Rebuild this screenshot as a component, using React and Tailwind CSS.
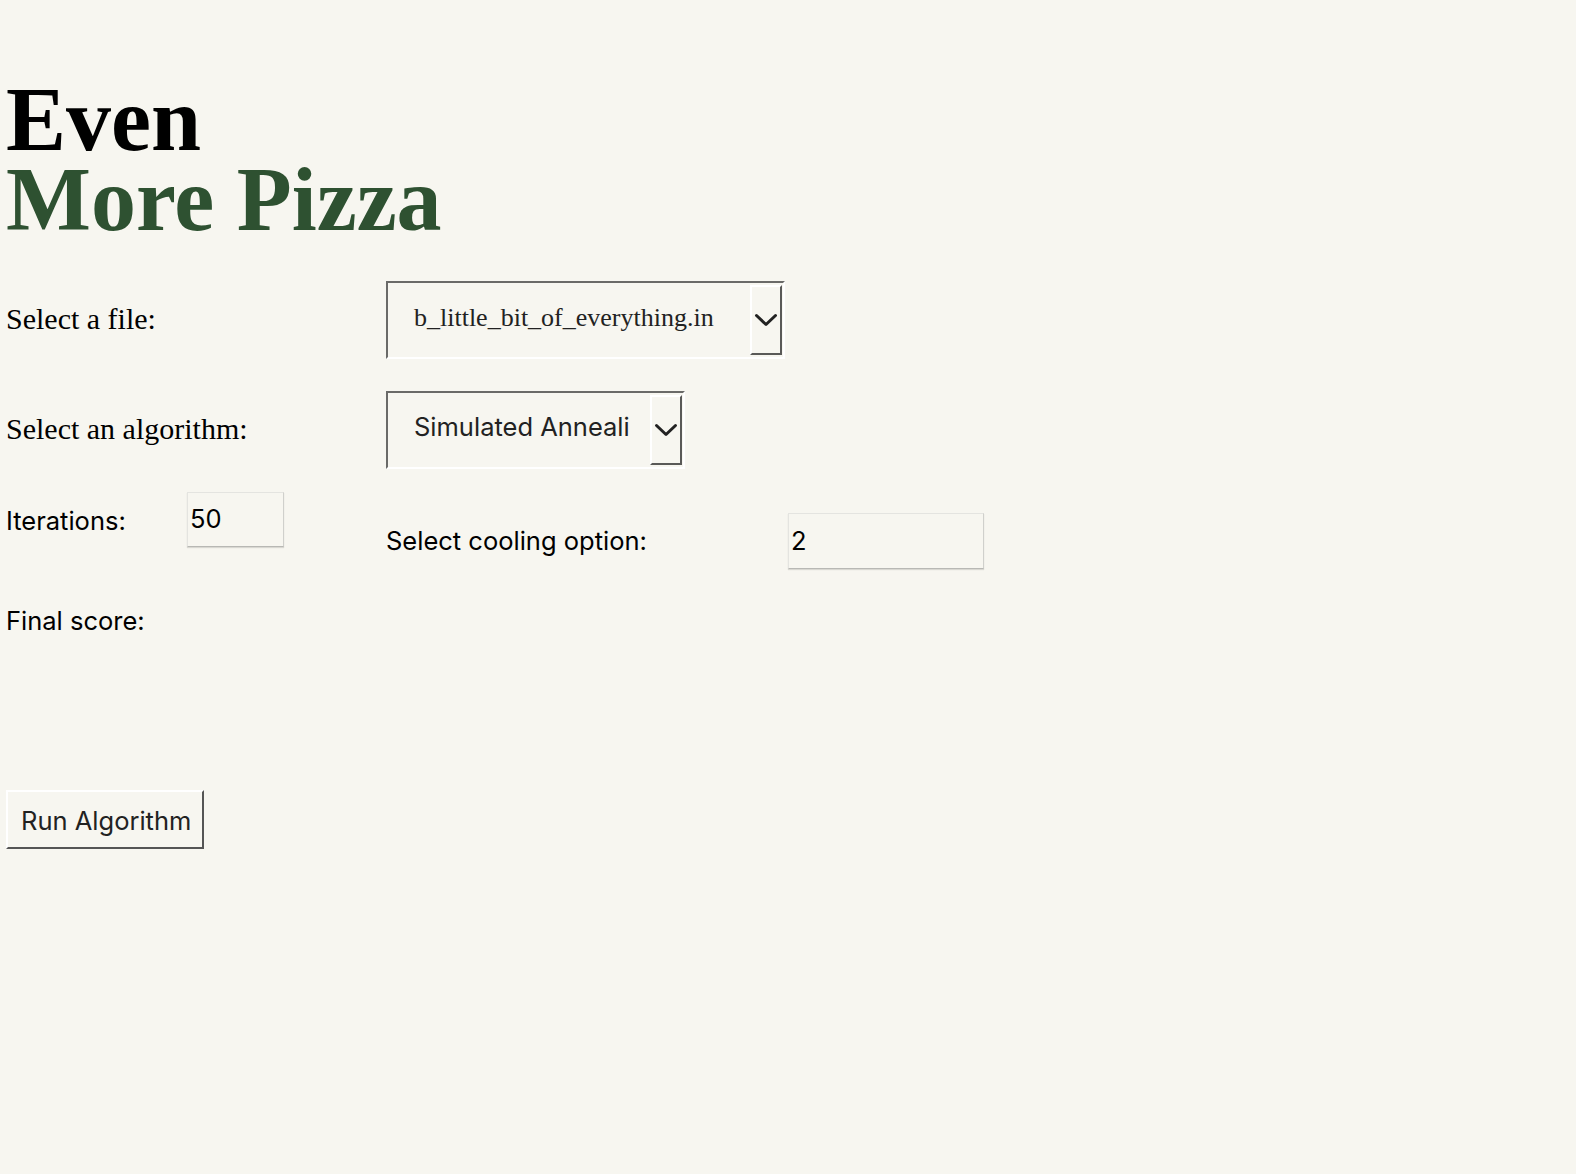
import { useState } from 'react';

const serif = { fontFamily: '"Liberation Serif", "Times New Roman", serif' };

function Chevron() {
  return (
    <svg width="24" height="16" viewBox="0 0 24 16" fill="none">
      <path d="M2.5 3.5 L12 12.5 L21.5 3.5" stroke="#222" strokeWidth="3" strokeLinecap="round" strokeLinejoin="round" />
    </svg>
  );
}

function FakeSelect({ value, width, textWidth, fontClass }) {
  return (
    <div
      className="flex items-stretch h-[78px] border-2 border-t-[#6a6a68] border-l-[#6a6a68] border-b-white border-r-white"
      style={{ width }}
    >
      <div
        className={`pl-[26px] pb-[5px] overflow-hidden whitespace-nowrap flex items-center text-[#222] ${fontClass}`}
        style={{ width: textWidth }}
      >
        {value}
      </div>
      <div className="flex-1" />
      <div className="my-[2px] mr-[1px] w-[32px] flex items-center justify-center border-2 border-t-white border-l-white border-b-[#5a5a58] border-r-[#5a5a58]">
        <Chevron />
      </div>
    </div>
  );
}

function NumberBox({ value, width, height }) {
  return (
    <div
      className="flex items-center pl-[2px] text-[25.5px] text-black border border-[#e4e4e0] border-b-[#b8b8b4] border-r-[#d0d0cc] shadow-[0_1px_1px_rgba(0,0,0,0.12)]"
      style={{ width, height }}
    >
      {value}
    </div>
  );
}

export default function App() {
  const [file] = useState('b_little_bit_of_everything.in');
  const [algorithm] = useState('Simulated Annealing');

  return (
    <div className="min-h-[1174px] bg-[#f7f6f0] pl-[6px] pt-[80px] font-['Inter',sans-serif]">
      {/* Title */}
      <h1 className="text-[90px] font-bold leading-[80px]" style={serif}>
        <div className="text-black">Even</div>
        <div className="text-[#2e5131]">More Pizza</div>
      </h1>

      {/* File select */}
      <div className="mt-[41px] flex items-center">
        <label className="w-[380px] pb-[4px] text-[30px] text-black" style={serif}>
          Select a file:
        </label>
        <FakeSelect value={file} width={399} textWidth={345} fontClass="text-[26px] font-['Liberation_Serif',serif]" />
      </div>

      {/* Algorithm select */}
      <div className="mt-[32px] flex items-center">
        <label className="w-[380px] pb-[4px] text-[30px] text-black" style={serif}>
          Select an algorithm:
        </label>
        <FakeSelect value={algorithm} width={299} textWidth={242} fontClass="text-[25.5px]" />
      </div>

      {/* Parameters */}
      <div className="mt-[23px] flex items-start">
        <div className="w-[380px] flex items-center">
          <span className="w-[181px] pt-[3px] text-[25.5px] text-black">Iterations:</span>
          <NumberBox value="50" width={97} height={55} />
        </div>
        <div className="mt-[21px] flex items-center">
          <span className="w-[402px] text-[25.5px] text-black">Select cooling option:</span>
          <NumberBox value="2" width={196} height={56} />
        </div>
      </div>

      {/* Result */}
      <div className="mt-[37px] text-[25.5px] leading-[30px] text-black">Final score:</div>

      <button className="mt-[154px] h-[59px] w-[198px] flex items-center pl-[13px] pt-[3px] text-[25.5px] text-[#222] bg-[#f7f6f0] border-2 border-t-white border-l-white border-b-[#555] border-r-[#555]">
        Run Algorithm
      </button>
    </div>
  );
}
